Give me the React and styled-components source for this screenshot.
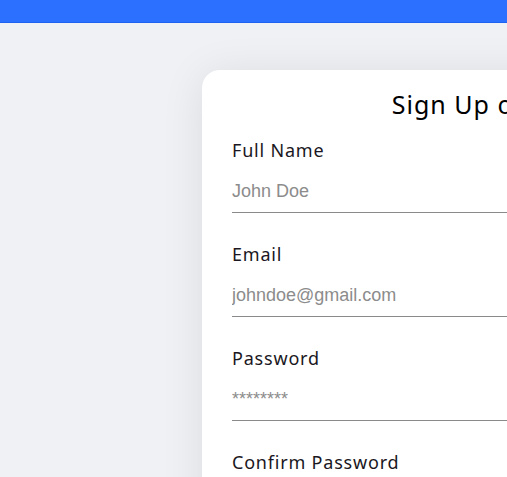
import React from 'react'
import styled, { createGlobalStyle } from 'styled-components'

const GlobalStyle = createGlobalStyle`
  html, body {
    margin: 0;
    padding: 0;
    background: #f0f1f4;
    overflow: hidden;
  }
  * {
    box-sizing: border-box;
  }
`

const TopBar = styled.header`
  height: 23px;
  background: #2b70ff;
  border-bottom: 1px solid #1f62f2;
`

const Main = styled.main`
  padding: 47px 0 0 202px;
  width: 1200px;
`

const Card = styled.section`
  width: 626px;
  background: #ffffff;
  border-radius: 18px;
  padding: 19px 30px 30px;
  box-shadow: 0 4px 44px rgba(20, 24, 40, 0.09);
  font-family: "Noto Sans", "Open Sans", sans-serif;
`

const Title = styled.h1`
  margin: 0 0 19px;
  font-size: 25px;
  line-height: 30px;
  font-weight: 400;
  letter-spacing: 1px;
  color: #000;
  text-align: center;
`

const Field = styled.div`
  display: flex;
  flex-direction: column;
  margin-bottom: 29px;
`

const Label = styled.label`
  font-size: 18px;
  line-height: 24px;
  letter-spacing: 0.8px;
  color: #1a1722;
`

const Input = styled.input`
  margin-top: 8px;
  padding: 11px 0 10px;
  border: none;
  border-bottom: 1px solid #8a8a8a;
  outline: none;
  background: transparent;
  font-family: "Liberation Sans", Arial, sans-serif;
  font-size: 18px;
  color: #222;

  &::placeholder {
    color: #8c8c8c;
  }
`

const fields = [
  { label: 'Full Name', type: 'text', placeholder: 'John Doe' },
  { label: 'Email', type: 'email', placeholder: 'johndoe@gmail.com' },
  { label: 'Password', type: 'password', placeholder: '********' },
  { label: 'Confirm Password', type: 'password', placeholder: '********' },
]

const App = () => {
  return (
    <>
      <GlobalStyle />
      <TopBar />
      <Main>
        <Card>
          <Title>Sign Up on Website</Title>
          {fields.map((f) => (
            <Field key={f.label}>
              <Label>{f.label}</Label>
              <Input type={f.type} placeholder={f.placeholder} />
            </Field>
          ))}
        </Card>
      </Main>
    </>
  )
}

export default App
